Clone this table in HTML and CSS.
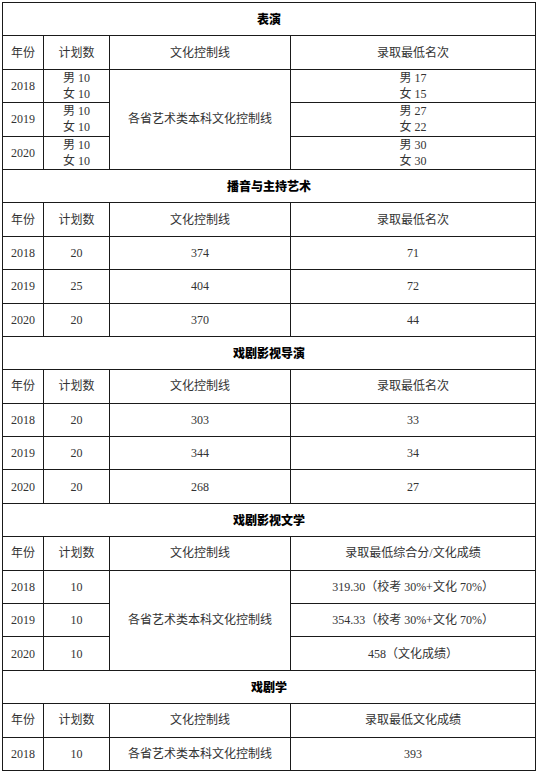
FILE: index.html
```html
<!DOCTYPE html>
<html lang="zh-CN">
<head>
<meta charset="utf-8">
<title>录取情况</title>
<link rel="stylesheet" href="styles.css">
</head>
<body>
<table class="score-table">
  <colgroup>
    <col class="c-year">
    <col class="c-plan">
    <col class="c-line">
    <col class="c-rank">
  </colgroup>
  <tbody>
    <tr class="title-row"><td colspan="4">表演</td></tr>
    <tr><td>年份</td><td>计划数</td><td>文化控制线</td><td>录取最低名次</td></tr>
    <tr><td>2018</td><td><div class="two">男 10<br>女 10</div></td><td rowspan="3">各省艺术类本科文化控制线</td><td><div class="two">男 17<br>女 15</div></td></tr>
    <tr><td>2019</td><td><div class="two">男 10<br>女 10</div></td><td><div class="two">男 27<br>女 22</div></td></tr>
    <tr><td>2020</td><td><div class="two">男 10<br>女 10</div></td><td><div class="two">男 30<br>女 30</div></td></tr>

    <tr class="title-row"><td colspan="4">播音与主持艺术</td></tr>
    <tr><td>年份</td><td>计划数</td><td>文化控制线</td><td>录取最低名次</td></tr>
    <tr><td>2018</td><td>20</td><td>374</td><td>71</td></tr>
    <tr><td>2019</td><td>25</td><td>404</td><td>72</td></tr>
    <tr><td>2020</td><td>20</td><td>370</td><td>44</td></tr>

    <tr class="title-row"><td colspan="4">戏剧影视导演</td></tr>
    <tr><td>年份</td><td>计划数</td><td>文化控制线</td><td>录取最低名次</td></tr>
    <tr><td>2018</td><td>20</td><td>303</td><td>33</td></tr>
    <tr><td>2019</td><td>20</td><td>344</td><td>34</td></tr>
    <tr><td>2020</td><td>20</td><td>268</td><td>27</td></tr>

    <tr class="title-row"><td colspan="4">戏剧影视文学</td></tr>
    <tr><td>年份</td><td>计划数</td><td>文化控制线</td><td>录取最低综合分/文化成绩</td></tr>
    <tr><td>2018</td><td>10</td><td rowspan="3">各省艺术类本科文化控制线</td><td>319.30（校考 30%+文化 70%）</td></tr>
    <tr><td>2019</td><td>10</td><td>354.33（校考 30%+文化 70%）</td></tr>
    <tr><td>2020</td><td>10</td><td>458（文化成绩）</td></tr>

    <tr class="title-row"><td colspan="4">戏剧学</td></tr>
    <tr><td>年份</td><td>计划数</td><td>文化控制线</td><td>录取最低文化成绩</td></tr>
    <tr><td>2018</td><td>10</td><td>各省艺术类本科文化控制线</td><td>393</td></tr>
  </tbody>
</table>
</body>
</html>
```
FILE: styles.css
```css
html, body {
  margin: 0;
  padding: 0;
  background: #ffffff;
}

body {
  padding: 2px 0 0 2px;
}

.score-table {
  width: 533px;
  border-collapse: collapse;
  table-layout: fixed;
  font-family: "Liberation Serif", "Noto Sans CJK SC", serif;
  font-size: 12px;
  color: #333333;
}

.c-year { width: 41px; }
.c-plan { width: 66px; }
.c-line { width: 181px; }
.c-rank { width: 245px; }

.score-table td {
  border: 1px solid #1a1a1a;
  height: 32.4px;
  padding: 0;
  text-align: center;
  vertical-align: middle;
  line-height: 16px;
}

.two {
  line-height: 16px;
}

.title-row td {
  font-family: "Noto Sans CJK SC", sans-serif;
  font-weight: 900;
  color: #000000;
  font-size: 12px;
}
```
